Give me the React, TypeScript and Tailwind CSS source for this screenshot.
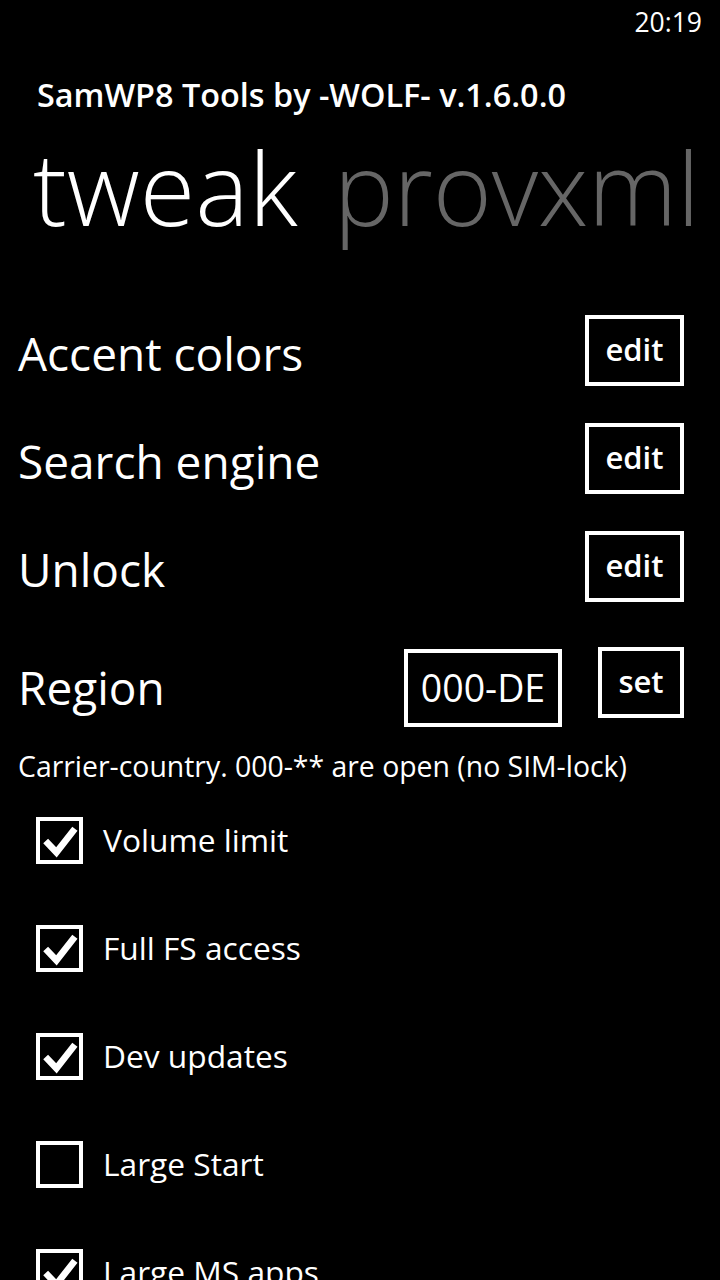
import React from "react";

const FONT = { fontFamily: '"Open Sans", "Noto Sans", "Liberation Sans", sans-serif' };

function EditButton({ label }: { label: string }) {
  return (
    <div className="w-[99px] h-[71px] border-[4px] border-white flex items-center justify-center">
      <span className="text-[31px] font-semibold leading-none -mt-[2px]">{label}</span>
    </div>
  );
}

function Check({ checked, label }: { checked: boolean; label: string }) {
  return (
    <div className="h-[108px] flex items-center pl-[36px]">
      <div className="w-[47px] h-[47px] border-[4.5px] border-white shrink-0">
        {checked && (
          <svg viewBox="0 0 38 38" className="w-full h-full">
            <path d="M5.5 19.5 L16 30.5 L34 7.5" fill="none" stroke="white" strokeWidth="6.5" strokeLinejoin="miter" strokeLinecap="butt" />
          </svg>
        )}
      </div>
      <span className="ml-[20px] text-[31.7px] leading-none -mt-[1px]">{label}</span>
    </div>
  );
}

export default function App() {
  const rows = ["Accent colors", "Search engine", "Unlock"];
  const checks: [string, boolean][] = [
    ["Volume limit", true],
    ["Full FS access", true],
    ["Dev updates", true],
    ["Large Start", false],
    ["Large MS apps", true],
  ];
  return (
    <div className="w-[720px] h-[1280px] bg-black text-white overflow-hidden" style={FONT}>
      <div className="h-[44px] flex justify-end pr-[18px]">
        <span className="text-[26.5px] leading-[44px]">20:19</span>
      </div>
      <div className="mt-[32px] pl-[37px] text-[32.4px] leading-[36px] font-semibold whitespace-nowrap">
        SamWP8 Tools by -WOLF- v.1.6.0.0
      </div>
      <div className="mt-[23px] pl-[33px] text-[101px] leading-[104px] font-light whitespace-nowrap flex">
        <span>tweak</span>
        <span className="ml-[36px] text-[#666666] tracking-[-0.2px]">provxml</span>
      </div>
      <div className="mt-[57px]">
        {rows.map((r) => (
          <div key={r} className="h-[108px] flex items-center justify-between pl-[18px] pr-[36px]">
            <span className="text-[46px] leading-none mt-[6px]">{r}</span>
            <EditButton label="edit" />
          </div>
        ))}
        <div className="h-[128px] flex items-center pl-[18px] pr-[36px]">
          <span className="text-[46px] leading-none mt-[6px]">Region</span>
          <div className="flex-1" />
          <div className="mt-[8px] w-[158px] h-[78px] border-[4px] border-white flex items-center justify-center">
            <span className="text-[37.5px] leading-none">000-DE</span>
          </div>
          <div className="ml-[36px] mb-[3px] w-[86px] h-[71px] border-[4px] border-white flex items-center justify-center">
            <span className="text-[31px] font-semibold leading-none -mt-[2px]">set</span>
          </div>
        </div>
        <div className="pl-[18px] text-[28.4px] leading-[36px] whitespace-nowrap">
          Carrier-country. 000-** are open (no SIM-lock)
        </div>
        <div className="mt-[2px]">
          {checks.map(([l, c]) => (
            <Check key={l} label={l} checked={c} />
          ))}
        </div>
      </div>
    </div>
  );
}
